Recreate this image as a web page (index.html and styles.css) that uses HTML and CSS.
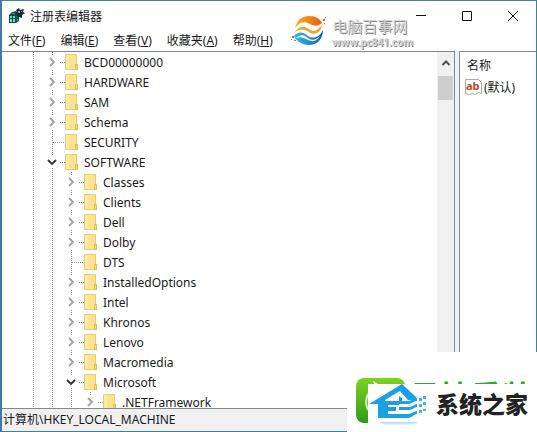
FILE: index.html
```html
<!DOCTYPE html>
<html lang="zh-CN">
<head>
  <meta charset="UTF-8" />
  <meta name="viewport" content="width=device-width, initial-scale=1.0" />
  <title>注册表编辑器</title>
  <link rel="stylesheet" href="styles.css">
</head>
<body>

  <svg class="defs" width="0" height="0" aria-hidden="true">
    <symbol id="folder" viewBox="0 0 14 16">
      <path d="M.5.5h11v10h1v5H.5z" fill="#fce391" stroke="#eccb6c"/>
      <path d="M1 1h3v14H1z" fill="#fdeaa8"/>
      <path d="M10.500 15.500v-5h2v5z" fill="#f9d870" stroke="#e4ba4e"/>
    </symbol>
    <symbol id="chevron" viewBox="0 0 12 12">
      <path d="M4 2l4 4-4 4" fill="none" stroke="currentColor" stroke-width="1.800"/>
    </symbol>
  </svg>

  <div class="window">
    <header class="titlebar">
      <svg class="app-icon" width="16" height="16" viewBox="0 0 16 16">
        <path d="M0 7l3-3 4-1 3 3v7l-3 2H0z" fill="#174c50"/>
        <path d="M1 8h2v2H1zM4 8h2v2H4zM1 11h2v3H1zM4 11h2v3H4z" fill="#5fe3d6"/>
        <path d="M2 6l2-1h3L5 6zM8 8h1v2H8zM8 11h1v2H8z" fill="#26a99e"/>
        <path d="M7 2l3-2 1 2 4-1-1 3 2 1-3 2v3l-3-1-1 2-1-4-2-1 2-2z" fill="#182c30"/>
        <path d="M9 3h2v2H9zM12 3h1v1h-1z" fill="#8fa9ab"/>
      </svg>
      <h1>注册表编辑器</h1>
      <div class="window-buttons">
        <button aria-label="最小化"><svg width="12" height="12"><path d="M1 5.500h10" stroke="#111"/></svg></button>
        <button aria-label="最大化"><svg width="12" height="12"><path d="M1.500 1.500h9v9h-9z" stroke="#111" fill="none"/></svg></button>
        <button aria-label="关闭"><svg width="12" height="12"><path d="M1 1l10 10M11 1L1 11" stroke="#111"/></svg></button>
      </div>
    </header>

    <nav class="menubar">
      <button>文件(<u>F</u>)</button>
      <button>编辑(<u>E</u>)</button>
      <button>查看(<u>V</u>)</button>
      <button>收藏夹(<u>A</u>)</button>
      <button>帮助(<u>H</u>)</button>
    </nav>

    <main class="panes">
      <section class="tree-pane">
        <ul class="tree root">
          <li>
            <ul class="tree">
              <li><div class="key"><button class="toggle" aria-label="展开"><svg><use href="#chevron"/></svg></button><svg class="folder"><use href="#folder"/></svg>BCD00000000</div></li>
              <li><div class="key"><button class="toggle" aria-label="展开"><svg><use href="#chevron"/></svg></button><svg class="folder"><use href="#folder"/></svg>HARDWARE</div></li>
              <li><div class="key"><button class="toggle" aria-label="展开"><svg><use href="#chevron"/></svg></button><svg class="folder"><use href="#folder"/></svg>SAM</div></li>
              <li><div class="key"><button class="toggle" aria-label="展开"><svg><use href="#chevron"/></svg></button><svg class="folder"><use href="#folder"/></svg>Schema</div></li>
              <li><div class="key"><span class="leaf"></span><svg class="folder"><use href="#folder"/></svg>SECURITY</div></li>
              <li>
                <div class="key"><button class="toggle open" aria-label="折叠"><svg><use href="#chevron"/></svg></button><svg class="folder"><use href="#folder"/></svg>SOFTWARE</div>
                <ul class="tree">
                  <li><div class="key"><button class="toggle" aria-label="展开"><svg><use href="#chevron"/></svg></button><svg class="folder"><use href="#folder"/></svg>Classes</div></li>
                  <li><div class="key"><button class="toggle" aria-label="展开"><svg><use href="#chevron"/></svg></button><svg class="folder"><use href="#folder"/></svg>Clients</div></li>
                  <li><div class="key"><button class="toggle" aria-label="展开"><svg><use href="#chevron"/></svg></button><svg class="folder"><use href="#folder"/></svg>Dell</div></li>
                  <li><div class="key"><button class="toggle" aria-label="展开"><svg><use href="#chevron"/></svg></button><svg class="folder"><use href="#folder"/></svg>Dolby</div></li>
                  <li><div class="key"><span class="leaf"></span><svg class="folder"><use href="#folder"/></svg>DTS</div></li>
                  <li><div class="key"><button class="toggle" aria-label="展开"><svg><use href="#chevron"/></svg></button><svg class="folder"><use href="#folder"/></svg>InstalledOptions</div></li>
                  <li><div class="key"><button class="toggle" aria-label="展开"><svg><use href="#chevron"/></svg></button><svg class="folder"><use href="#folder"/></svg>Intel</div></li>
                  <li><div class="key"><button class="toggle" aria-label="展开"><svg><use href="#chevron"/></svg></button><svg class="folder"><use href="#folder"/></svg>Khronos</div></li>
                  <li><div class="key"><button class="toggle" aria-label="展开"><svg><use href="#chevron"/></svg></button><svg class="folder"><use href="#folder"/></svg>Lenovo</div></li>
                  <li><div class="key"><button class="toggle" aria-label="展开"><svg><use href="#chevron"/></svg></button><svg class="folder"><use href="#folder"/></svg>Macromedia</div></li>
                  <li>
                    <div class="key"><button class="toggle open" aria-label="折叠"><svg><use href="#chevron"/></svg></button><svg class="folder"><use href="#folder"/></svg>Microsoft</div>
                    <ul class="tree">
                      <li><div class="key"><button class="toggle" aria-label="展开"><svg><use href="#chevron"/></svg></button><svg class="folder"><use href="#folder"/></svg>.NETFramework</div></li>
                    </ul>
                  </li>
                </ul>
              </li>
            </ul>
          </li>
        </ul>
        <div class="scrollbar">
          <button aria-label="向上滚动"><svg width="10" height="8"><path d="M1.500 5L5 1.500 8.500 5" fill="none" stroke="#505050" stroke-width="2"/></svg></button>
          <div class="thumb"></div>
        </div>
      </section>

      <section class="value-pane">
        <table>
          <thead><tr><th>名称</th></tr></thead>
          <tbody>
            <tr><td>
              <div class="value">
                <svg width="17" height="16" viewBox="0 0 17 16">
                  <path d="M.5.5h13l3 3v11l-3-1-3 2-3-1-3 1-4-1z" fill="#fff" stroke="#a9a9a9"/>
                  <text x="1" y="11" class="ab">ab</text>
                </svg>
                (默认)
              </div>
            </td></tr>
          </tbody>
        </table>
      </section>
    </main>

    <footer class="statusbar">计算机\HKEY_LOCAL_MACHINE</footer>
  </div>

  <div class="site-mark">
    <svg width="36" height="32" viewBox="0 0 36 32">
      <defs>
        <linearGradient id="warm" x1="0" x2="1"><stop offset="0" stop-color="#f9b51c"/><stop offset="1" stop-color="#e95c1c"/></linearGradient>
        <linearGradient id="cool" x1="0" x2="1"><stop offset="0" stop-color="#35b9ee"/><stop offset="1" stop-color="#1460ad"/></linearGradient>
      </defs>
      <path d="M4 13C6 5 11 1 18 1c7 0 11 3 13 7-5 4-8 3-12 1-6-3-10-2-15 4z" fill="url(#warm)"/>
      <path d="M3 18c5-7 10-8 15-4 4 4 8 2 13-4-1 7-6 10-11 8-6-3-10-6-17 0z" fill="#f7a01e"/>
      <path d="M3 21c5-5 9-4 14 0 5 3 11 2 15-6 0 9-6 15-14 15-6 0-12-3-15-9z" fill="url(#cool)"/>
      <path d="M6 13c5-5 8-4 12-1s8 2 12-3c-4 7-8 7-12 5s-7-4-12-1z" fill="#fff"/>
      <path d="M5 23c5-4 8-3 12 0s8 2 12-2c-4 6-8 6-12 4s-7-4-12-2z" fill="#fff"/>
      <path d="M32 4h2v2h-2zM34 2h1v1h-1zM33 8h1v1h-1z" fill="#ee5a35"/>
      <path d="M1 21h2v2H1zM0 24h1v1H0zM3 25h2v1H3z" fill="#2a9ad8"/>
    </svg>
    <div>
      <strong>电脑百事网</strong>
      <span>www.pc841.com</span>
    </div>
  </div>

  <aside class="promo">
    <div class="promo-back">
      <svg width="49" height="45" viewBox="0 0 49 45">
        <defs><linearGradient id="leaf" x2="0" y2="1"><stop offset="0" stop-color="#7ed321"/><stop offset="1" stop-color="#2f9a1c"/></linearGradient></defs>
        <rect width="49" height="45" rx="8" fill="url(#leaf)"/>
        <path d="M12 32c-4-9-1-17 5-21" fill="none" stroke="#d9f3bd" stroke-width="2"/>
        <path d="M17 3l5 3-3 2z" fill="#fff"/>
      </svg>
      <span>易捷重装</span>
    </div>
    <div class="promo-front">
      <svg width="60" height="44" viewBox="0 0 60 44">
        <defs><linearGradient id="fade" x2="0" y2="1"><stop offset="0" stop-color="#a6d9f3"/><stop offset="1" stop-color="#fff"/></linearGradient></defs>
        <path d="M1 20L34 0l14 13v3h-8L32 7 17 16v18H10V20z" fill="#1ba1e2"/>
        <path d="M17 17h14v4H20v2h8v4h-8v3h11v4H17z" fill="#1ba1e2"/>
        <path d="M31 12l3 2v3h6c4 0 5-3 9-3v3c-4 0-5 3-9 3h-9zM31 23h10c4 0 5-3 8-3v3c-3 0-4 3-8 3H31zM31 30h9c4 0 6-3 9-3v3c-3 0-5 4-9 4h-9z" fill="#1ba1e2"/>
        <path d="M51 14h3v3h-3zM55 12h3v3h-3zM51 20h3v3h-3zM55 18h3v3h-3zM51 26h3v3h-3zM55 25h3v2h-3z" fill="#43b3e8"/>
        <path d="M12 38h38c-3 3-10 3-18 3s-15 3-20-3z" fill="url(#fade)"/>
      </svg>
      <strong>系统之家</strong>
    </div>
  </aside>

</body>
</html>
```
FILE: styles.css
```css
* { margin: 0; padding: 0; box-sizing: border-box; }

body {
  font-family: "Noto Sans", "Noto Sans CJK SC", sans-serif;
  font-size: 12px;
  color: #1a1a1a;
  background: #fff;
  overflow: hidden;
}

button {
  font: inherit;
  color: inherit;
  background: none;
  border: none;
}

ul { list-style: none; }

.defs { display: block; }

.window {
  display: flex;
  flex-direction: column;
  height: 100vh;
  border: 1px solid #3b8496;
  border-left: 2px solid #4179ae;
}

.titlebar {
  display: flex;
  align-items: center;
  height: 30px;
  padding-left: 7px;
  gap: 5px;
}

.titlebar h1 {
  font-size: 12px;
  font-weight: normal;
}

.window-buttons {
  display: flex;
  margin-left: auto;
}

.window-buttons button {
  display: flex;
  align-items: center;
  justify-content: center;
  width: 46px;
  height: 28px;
}

.menubar {
  display: flex;
  gap: 15px;
  height: 20px;
  padding-left: 6px;
  line-height: 20px;
}

.panes {
  display: flex;
  flex: 1;
  gap: 4px;
  min-height: 0;
  background: #eef3f8;
}

.tree-pane {
  display: flex;
  flex: 1;
  background: #fff;
  border-top: 1px solid #828790;
  border-right: 1px solid #828790;
  overflow: hidden;
}

/* each level draws its own dotted guide down the left side */
.tree {
  padding-left: 19px;
  background: repeating-linear-gradient(#8c8c8c 0 1px, transparent 1px 2px) 9px 0 / 1px 100% no-repeat;
}

.root {
  flex: 1;
  margin-left: 22px;
}

.key {
  display: flex;
  align-items: center;
  height: 20px;
  margin-left: -19px;
  white-space: nowrap;
}

.toggle {
  display: flex;
  align-items: center;
  width: 22px;
  height: 12px;
  padding-left: 3px;
  color: #a0a0a0;
  background: repeating-linear-gradient(90deg, #8c8c8c 0 1px, transparent 1px 2px) right 6px / 5px 1px no-repeat;
}

.toggle svg {
  width: 12px;
  height: 14px;
  background: #fff;
}

.toggle.open { color: #333; }
.toggle.open svg { transform: rotate(90deg); }

.leaf {
  width: 12px;
  height: 1px;
  margin-left: 10px;
  background: repeating-linear-gradient(90deg, #8c8c8c 0 1px, transparent 1px 2px);
}

.folder {
  width: 14px;
  height: 16px;
  margin-right: 5px;
}

.scrollbar {
  width: 17px;
  background: #f0f0f0;
}

.scrollbar button {
  display: flex;
  align-items: center;
  justify-content: center;
  width: 100%;
  height: 24px;
}

.thumb {
  height: 24px;
  margin: 0 1px;
  background: #cdcdcd;
}

.value-pane {
  width: 77px;
  background: #fff;
  border-top: 1px solid #828790;
  border-left: 1px solid #828790;
  padding-left: 5px;
}

.value-pane table { border-collapse: collapse; }

.value-pane th {
  height: 25px;
  padding-left: 2px;
  font-weight: normal;
  text-align: left;
}

.value {
  display: flex;
  align-items: center;
  gap: 2px;
  height: 20px;
}

.ab {
  font: bold 11px "Noto Sans", sans-serif;
  fill: #bd4b2c;
}

.statusbar {
  height: 23px;
  padding-left: 1px;
  line-height: 22px;
  background: #f0f0f0;
  border-top: 1px solid #828790;
}

/* site logo laid over the title bar */
.site-mark {
  position: absolute;
  top: 15px;
  right: 124px;
  display: flex;
  gap: 5px;
}

.site-mark div {
  display: flex;
  flex-direction: column;
  padding-top: 2px;
}

.site-mark strong {
  font-size: 15px;
  line-height: 18px;
  font-weight: normal;
  color: #d4d4d4;
  text-shadow: 1px 1px 0 #8a8a8a;
}

.site-mark span {
  font: bold 10px/14px "Noto Sans", sans-serif;
  color: #d4d4d4;
  text-shadow: 1px 1px 0 #8a8a8a;
}

/* promo banner in the bottom right corner */
.promo {
  position: absolute;
  right: 0;
  bottom: 0;
  width: 190px;
  height: 80px;
  padding: 26px 0 0 9px;
  background: #fff;
  overflow: hidden;
}

.promo-back {
  display: flex;
  gap: 4px;
  height: 46px;
}

.promo-back span {
  font-size: 31px;
  line-height: 36px;
  font-weight: bold;
  color: #2fa336;
  white-space: nowrap;
}

.promo-front {
  position: absolute;
  top: 32px;
  left: 21px;
  right: 0;
  bottom: 0;
  display: flex;
  gap: 8px;
  background: #fff;
}

.promo-front strong {
  font-size: 23px;
  line-height: 40px;
  font-weight: 900;
  color: #222;
}
```
